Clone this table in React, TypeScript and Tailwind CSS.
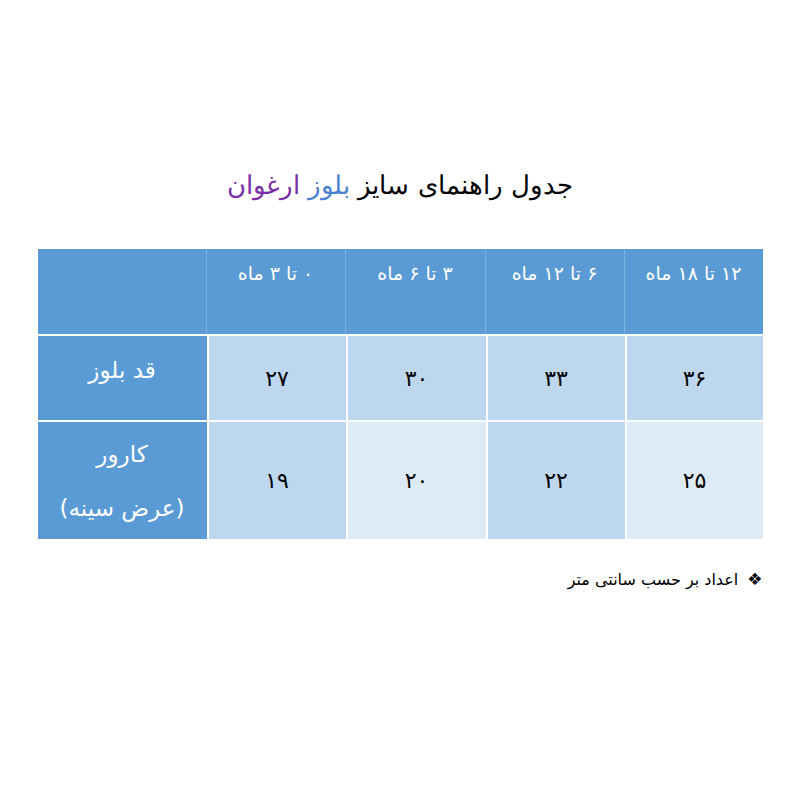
import React from "react";

const font = { fontFamily: '"DejaVu Sans", "Noto Sans", sans-serif' };

export default function App() {
  return (
    <div className="w-[800px] h-[800px] bg-white flex flex-col items-center" style={font}>
      <div dir="rtl" className="mt-[165px] text-[26px] leading-[40px] text-black font-light tracking-tight">
        جدول راهنمای سایز <span className="text-[#4a7fd0]">بلوز</span>{" "}
        <span className="text-[#7a2fa8]">ارغوان</span>
      </div>

      <div className="mt-[44px] w-[725px] grid grid-cols-[169px_139px_140px_139px_138px] grid-rows-[85px_86px_119px] bg-white">
        {/* header */}
        <div className="bg-[#5b9bd5] border-r border-[#7fb1df]"></div>
        {["۰ تا ۳ ماه", "۳ تا ۶ ماه", "۶ تا ۱۲ ماه", "۱۲ تا ۱۸ ماه"].map((t, i) => (
          <div
            key={t}
            dir="rtl"
            className={`bg-[#5b9bd5] text-white text-[19px] flex justify-center pt-[10px] ${i < 3 ? "border-r border-[#7fb1df]" : ""}`}
          >
            {t}
          </div>
        ))}

        {/* row 1 */}
        <div dir="rtl" className="bg-[#5b9bd5] text-white text-[23px] flex items-center justify-center pb-[16px] border-t-2 border-white">
          قد بلوز
        </div>
        {["۲۷", "۳۰", "۳۳", "۳۶"].map((t) => (
          <div key={t} className="bg-[#bdd7ee] text-black text-[22px] flex items-center justify-center border-t-2 border-l-2 border-white">
            {t}
          </div>
        ))}

        {/* row 2 */}
        <div dir="rtl" className="bg-[#5b9bd5] text-white text-[23px] flex flex-col items-center justify-center leading-[54px] border-t-2 border-white">
          <span>کارور</span>
          <span>(عرض سینه)</span>
        </div>
        {[
          ["۱۹", "bg-[#bdd7ee]"],
          ["۲۰", "bg-[#ddebf7]"],
          ["۲۲", "bg-[#bdd7ee]"],
          ["۲۵", "bg-[#ddebf7]"],
        ].map(([t, c]) => (
          <div key={t} className={`${c} text-black text-[22px] flex items-center justify-center border-t-2 border-l-2 border-white`}>
            {t}
          </div>
        ))}
      </div>

      <div className="w-[725px] flex justify-end mt-[28px]">
        <div dir="rtl" className="text-[16px] text-black flex items-center gap-[9px]">
          <span className="text-[17px]">❖</span>
          <span>اعداد بر حسب سانتی متر</span>
        </div>
      </div>
    </div>
  );
}
